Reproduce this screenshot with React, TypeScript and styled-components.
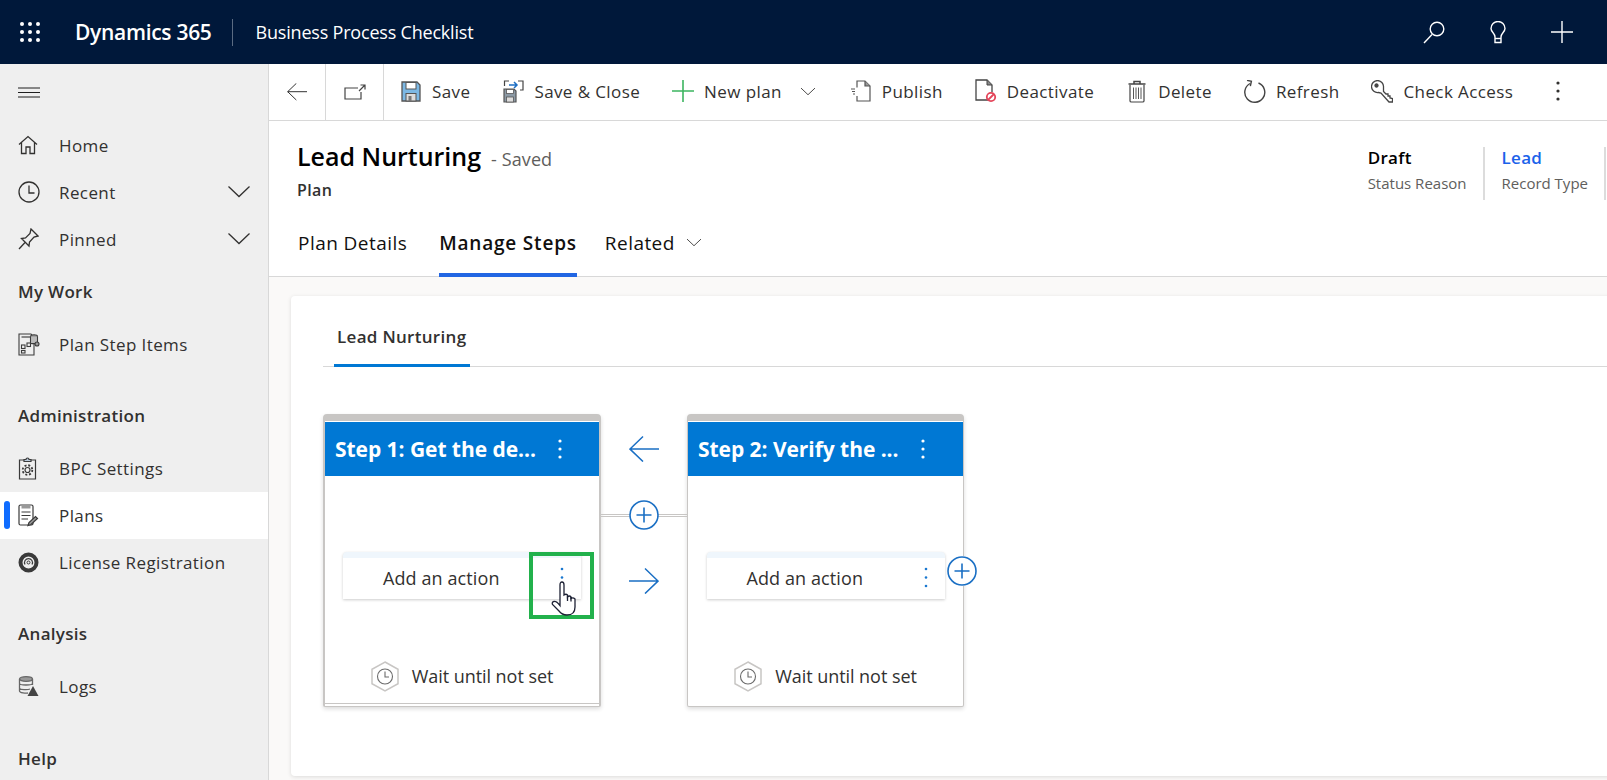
import * as React from 'react';
import styled, { createGlobalStyle } from 'styled-components';

const GlobalStyle = createGlobalStyle`
  html, body { margin: 0; padding: 0; height: 100%; overflow: hidden; background: #fff; }
  body { font-family: 'Open Sans', 'Noto Sans', 'Liberation Sans', sans-serif; color: #323130; }
  * { box-sizing: border-box; }
`;

const Page = styled.div`
  width: 1607px;
  height: 780px;
  display: flex;
  flex-direction: column;
  overflow: hidden;
`;

// top navy bar
const TopBar = styled.header`
  height: 64px;
  flex: none;
  background: #00183a;
  color: #fff;
  display: flex;
  align-items: center;
  padding-left: 20px;
`;

const AppName = styled.div`
  margin-left: 35px;
  font-size: 21px;
  font-weight: 600;
  letter-spacing: -0.3px;
  padding-right: 20px;
  height: 27px;
  line-height: 27px;
  border-right: 1px solid #5b6b82;
`;

const EntityName = styled.div`
  margin-left: 23px;
  font-size: 18px;
  letter-spacing: -0.2px;
`;

const TopIcons = styled.div`
  margin-left: auto;
  display: flex;
  align-items: center;
  gap: 45px;
  padding-right: 34px;
`;

const Body = styled.div`
  flex: 1;
  display: flex;
  min-height: 0;
`;

// left navigation
const Sidebar = styled.nav`
  width: 269px;
  flex: none;
  background: #efefef;
  border-right: 1px solid #d8d8d8;
  overflow: hidden;
`;

const Burger = styled.div`
  height: 58px;
  display: flex;
  align-items: center;
  padding: 0 0 2px 18px;
`;

const NavRow = styled.div<{ $active?: boolean }>`
  position: relative;
  height: 47px;
  display: flex;
  align-items: center;
  padding: 0 17px 1px 18px;
  background: ${(p) => (p.$active ? '#fff' : 'transparent')};
  font-size: 17px;
  letter-spacing: 0.4px;
  color: #323130;
`;

const ActiveMark = styled.span`
  position: absolute;
  left: 4px;
  top: 9px;
  width: 6px;
  height: 28px;
  border-radius: 3px;
  background: #0f6cff;
`;

const NavIcon = styled.span`
  width: 41px;
  flex: none;
  display: flex;
  align-items: center;
`;

const NavChevron = styled.span`
  margin-left: auto;
  display: flex;
`;

const NavGroup = styled.div<{ $gap: number }>`
  margin-top: ${(p) => p.$gap}px;
`;

const NavLabel = styled.div`
  height: 48px;
  margin-bottom: 4px;
  padding: 0 0 4px 18px;
  display: flex;
  align-items: center;
  font-size: 17px;
  font-weight: 600;
  letter-spacing: 0.3px;
  color: #323130;
`;

const Main = styled.main`
  flex: 1;
  min-width: 0;
  display: flex;
  flex-direction: column;
`;

// command bar
const Toolbar = styled.div`
  height: 57px;
  flex: none;
  display: flex;
  align-items: center;
  border-bottom: 1px solid #d8d8d8;
  background: #fff;
`;

const ToolSquare = styled.div<{ $width: number }>`
  width: ${(p) => p.$width}px;
  height: 100%;
  flex: none;
  display: flex;
  align-items: center;
  justify-content: center;
  border-right: 1px solid #d8d8d8;
`;

const ToolButton = styled.div`
  display: flex;
  align-items: center;
  gap: 10px;
  padding: 0 16px 2px;
  font-size: 17px;
  letter-spacing: 0.4px;
  color: #323130;
  white-space: nowrap;
`;

const ToolIcon = styled.span`
  width: 22px;
  height: 24px;
  flex: none;
  display: flex;
  align-items: center;
  justify-content: center;
`;

const SplitChevron = styled.span`
  margin: 0 2px 0 8px;
  display: flex;
`;

const ToolMore = styled.div`
  margin-left: 10px;
  padding: 0 16px 2px;
  display: flex;
`;

// record header
const FormHead = styled.div`
  flex: none;
  height: 103px;
  display: flex;
  justify-content: space-between;
  padding-left: 28px;
  background: #fff;
`;

const TitleBlock = styled.div`
  padding-top: 17px;
`;

const TitleRow = styled.div`
  display: flex;
  align-items: baseline;
  gap: 10px;
  height: 36px;
`;

const Title = styled.h1`
  margin: 0;
  font-size: 25px;
  line-height: 36px;
  font-weight: 600;
  color: #000;
`;

const SavedNote = styled.span`
  font-size: 18px;
  letter-spacing: 0.1px;
  color: #605e5c;
`;

const EntityType = styled.div`
  margin-top: 5px;
  font-size: 16px;
  font-weight: 600;
  color: #323130;
  letter-spacing: 0.4px;
`;

const HeadFields = styled.div`
  display: flex;
  align-items: flex-start;
  padding-top: 26px;
  padding-right: 1px;
`;

const HeadField = styled.div`
  height: 53px;
  padding: 0 16px 0 17px;
  border-right: 2px solid #dcdcdc;
`;

const FieldValue = styled.div<{ $link?: boolean }>`
  font-size: 17px;
  line-height: 22px;
  font-weight: 600;
  letter-spacing: 0.3px;
  color: ${(p) => (p.$link ? '#1b62ea' : '#000')};
`;

const FieldLabel = styled.div`
  margin-top: 5px;
  font-size: 15px;
  line-height: 19px;
  color: #605e5c;
`;

const FormTabs = styled.div`
  flex: none;
  height: 53px;
  padding: 0 0 0 29px;
  display: flex;
  gap: 32px;
  background: #fff;
  border-bottom: 1px solid #d8d8d8;
`;

const FormTab = styled.div<{ $active?: boolean; $tight?: boolean }>`
  height: 53px;
  display: flex;
  align-items: center;
  gap: 11px;
  padding-bottom: 12px;
  margin-left: ${(p) => (p.$tight ? -4 : 0)}px;
  font-size: 19px;
  letter-spacing: ${(p) => (p.$active ? 0.8 : 0.45)}px;
  font-weight: ${(p) => (p.$active ? 600 : 400)};
  color: #11100f;
  border-bottom: 4px solid ${(p) => (p.$active ? '#2266e3' : 'transparent')};
`;

const Content = styled.div`
  flex: 1;
  min-height: 0;
  background: #faf9f8;
  padding: 19px 0 0 22px;
  overflow: hidden;
`;

const Card = styled.section`
  width: 1330px;
  height: 480px;
  background: #fff;
  border-radius: 4px;
  box-shadow: 0 1px 4px rgba(0, 0, 0, 0.12);
  padding-left: 32px;
`;

const CardTabs = styled.div`
  height: 71px;
  display: flex;
  align-items: flex-end;
  padding-left: 11px;
  border-bottom: 1px solid #d8d8d8;
`;

const CardTab = styled.div`
  height: 54px;
  width: 136px;
  margin-bottom: -1px;
  padding: 10px 3px 0;
  font-size: 17px;
  line-height: 27px;
  font-weight: 600;
  letter-spacing: 0.3px;
  color: #323130;
  white-space: nowrap;
  border-bottom: 3px solid #0078d4;
`;

const Steps = styled.div`
  display: flex;
  margin-top: 47px;
`;

const StepCard = styled.div<{ $selected?: boolean; $width: number }>`
  width: ${(p) => p.$width}px;
  height: 293px;
  flex: none;
  display: flex;
  flex-direction: column;
  background: #fff;
  border-radius: 4px 4px 2px 2px;
  border: ${(p) => (p.$selected ? 2 : 1)}px solid #c8c6c4;
  border-top: 7px solid #c8c6c4;
  border-bottom: 1px solid #c8c6c4;
  box-shadow: ${(p) => (p.$selected ? 'inset 0 -2px 0 #fff, inset 0 -3px 0 #c8c6c4, ' : '')}0 2px 4px rgba(0, 0, 0, 0.14);
`;

const StepHead = styled.div`
  margin-top: 1px;
  height: 54px;
  flex: none;
  background: #0078d4;
  color: #fff;
  display: flex;
  align-items: center;
  padding-left: 10px;
`;

const StepTitle = styled.div`
  width: 222px;
  flex: none;
  font-size: 21px;
  font-weight: 700;
  letter-spacing: -0.05px;
  white-space: nowrap;
`;

const ActionBox = styled.div`
  position: relative;
  margin: 76px auto 0;
  width: 238px;
  height: 47px;
  flex: none;
  display: flex;
  align-items: center;
  padding-top: 6px;
  background: #fff;
  border-top: 6px solid #eff6fc;
  border-radius: 4px 4px 0 0;
  box-shadow: 0 1px 3px rgba(0, 0, 0, 0.2);
`;

const ActionText = styled.div`
  margin-left: 40px;
  font-size: 18px;
  letter-spacing: 0.1px;
  margin-top: -8px;
  color: #323130;
  white-space: nowrap;
`;

const ActionMenu = styled.span`
  position: absolute;
  left: 216px;
  top: 9px;
  display: flex;
`;

const AddRound = styled.span`
  position: absolute;
  left: 240px;
  top: -2px;
  display: flex;
  background: #fff;
  border-radius: 50%;
`;

// green call-out and pointer drawn on top of the first step
const Highlight = styled.div`
  position: absolute;
  left: 186px;
  top: -6px;
  width: 65px;
  height: 67px;
  border: 4px solid #22b14c;
`;

const Pointer = styled.span`
  position: absolute;
  left: 208px;
  top: 23px;
  display: flex;
`;

const StepFoot = styled.div`
  margin-top: auto;
  height: 45px;
  flex: none;
  display: flex;
  align-items: flex-start;
  justify-content: center;
  gap: 13px;
  font-size: 18px;
  letter-spacing: -0.05px;
  color: #323130;
  line-height: 30px;
`;

const Between = styled.div`
  position: relative;
  width: 86px;
  flex: none;
  display: flex;
  flex-direction: column;
  align-items: center;
  gap: 38px;
  padding-top: 22px;
`;

const Connector = styled.div`
  position: absolute;
  left: 0;
  right: 0;
  top: 100px;
  height: 3px;
  border-top: 1px solid #c8c6c4;
  border-bottom: 1px solid #c8c6c4;
`;

const BetweenIcon = styled.span`
  position: relative;
  display: flex;
`;

const Waffle = () => (
  <svg width="20" height="20" viewBox="0 0 20 20" fill="#fff">
    {[2, 10, 18].flatMap((y) => [2, 10, 18].map((x) => <circle key={`${x}-${y}`} cx={x} cy={y} r="2" />))}
  </svg>
);

const Kebab = ({ color = '#323130', h = 20, r = 1.6 }: { color?: string; h?: number; r?: number }) => (
  <svg width="6" height={h} viewBox={`0 0 6 ${h}`} fill={color}>
    <circle cx="3" cy="2" r={r} />
    <circle cx="3" cy={h / 2} r={r} />
    <circle cx="3" cy={h - 2} r={r} />
  </svg>
);

const Chevron = ({ size = 24, stroke = '#323130' }: { size?: number; stroke?: string }) => (
  <svg width={size} height={size * 0.55} viewBox="0 0 24 13" fill="none" stroke={stroke} strokeWidth="1.3">
    <path d="M1.5 1.5L12 11.5L22.5 1.5" />
  </svg>
);

const line = { fill: 'none', stroke: '#323130', strokeWidth: 1.3 };

const HomeIcon = () => (
  <svg width="20" height="20" viewBox="0 0 20 20" {...line}>
    <path d="M1 9.5L10 1.5L19 9.5M3.5 7.5V18.5H8V12H12V18.5H16.5V7.5" />
  </svg>
);
const ClockIcon = () => (
  <svg width="22" height="22" viewBox="0 0 22 22" {...line}>
    <circle cx="11" cy="11" r="10" />
    <path d="M11 4.5V12H16.5" />
  </svg>
);
const PinIcon = () => (
  <svg width="21" height="22" viewBox="0 0 21 22" {...line}>
    <path d="M13 1L20 8L16 9L11.5 14L11 18L3.5 10.5L7.5 10L12 5.5L13 1Z" />
    <path d="M7 14.500L1 21" />
  </svg>
);
const PlanItemsIcon = () => (
  <svg width="22" height="23" viewBox="0 0 22 23" fill="none" stroke="#3c3c3c" strokeWidth="1.1">
    <path d="M1 1H13L16 4V22H1Z" />
    <rect x="3.500" y="3" width="9" height="2" fill="#888" stroke="none" />
    <rect x="3.500" y="12" width="3.500" height="3.500" />
    <rect x="9" y="10" width="3.500" height="3.500" />
    <rect x="3.500" y="17.500" width="3.500" height="2.500" />
    <ellipse cx="16" cy="3.500" rx="3.500" ry="1.800" fill="#888" />
    <path d="M12.500 3.500V10C12.500 11 19.500 11 19.500 10V3.500" fill="#bbb" />
    <circle cx="19" cy="11" r="2" fill="#999" />
  </svg>
);
const SettingsIcon = () => (
  <svg width="19" height="23" viewBox="0 0 19 23" fill="none" stroke="#3a3a3a" strokeWidth="1.2">
    <path d="M6 3H1.500V22H17.500V3H13" />
    <path d="M6 4.500V2.500H8C8 0.500 11 0.500 11 2.500H13V4.500Z" fill="#bcd" />
    <circle cx="9.500" cy="13" r="2.500" />
    <circle cx="9.500" cy="13" r="4.800" strokeDasharray="2 1.800" strokeWidth="1.800" />
  </svg>
);
const PlansIcon = () => (
  <svg width="21" height="23" viewBox="0 0 21 23" fill="none" stroke="#3a3a3a" strokeWidth="1.2">
    <rect x="1" y="1" width="14" height="20" rx="1.500" />
    <rect x="3.500" y="1" width="9" height="3.500" fill="#999" stroke="none" />
    <path d="M3.500 8H12.500M3.500 11.500H12.500M3.500 15H10" />
    <path d="M10 21.500L11 18.500L17.500 12.500L19.500 14.500L13 20.500Z" fill="#999" />
  </svg>
);
const LicenseIcon = () => (
  <svg width="21" height="21" viewBox="0 0 21 21" fill="none">
    <circle cx="10.500" cy="10.500" r="8" stroke="#3a3a3a" strokeWidth="4" />
    <path d="M7 12.500A4 4 0 1 1 14 12.500" stroke="#3a3a3a" strokeWidth="1.200" />
    <circle cx="10.500" cy="10.500" r="1.500" stroke="#3a3a3a" />
  </svg>
);
const LogsIcon = () => (
  <svg width="21" height="21" viewBox="0 0 21 21" fill="none" stroke="#666" strokeWidth="1.300">
    <ellipse cx="8" cy="3" rx="6.500" ry="2.300" fill="#999" />
    <path d="M1.500 3V15C1.500 17 8 17.500 10 17M14.500 3V9M1.500 7.500C1.500 9.500 14.500 9.500 14.500 7.500M1.500 12C1.500 14 10 14 12 13" />
    <path d="M15 10L20.500 20H9.500Z" fill="#444" stroke="none" />
  </svg>
);

const SaveIcon = () => (
  <svg width="20" height="21" viewBox="0 0 20 21">
    <path d="M1 1H16L19 4V20H1Z" fill="#7cb8e4" stroke="#555" strokeWidth="1.300" />
    <rect x="5" y="1.500" width="10" height="6.500" fill="#fff" stroke="#555" />
    <rect x="5" y="12.500" width="10" height="7.500" fill="#ddd" stroke="#555" />
    <rect x="7.500" y="15" width="3" height="5" fill="#777" />
  </svg>
);
const SaveCloseIcon = () => (
  <svg width="21" height="23" viewBox="0 0 21 23">
    <path d="M1 9H11L13 11V22H1Z" fill="#8c9aa6" stroke="#555" strokeWidth="1.200" />
    <rect x="3.500" y="9.500" width="7" height="4" fill="#fff" stroke="#555" strokeWidth="0.800" />
    <rect x="3.500" y="17" width="7" height="5" fill="#ddd" stroke="#555" strokeWidth="0.800" />
    <path d="M1.500 6V1H6M15 1H20V10H17" fill="none" stroke="#444" strokeWidth="1.200" />
    <path d="M6 5H14M11 2L14 5L11 8" fill="none" stroke="#1e6fc4" strokeWidth="1.500" />
  </svg>
);
const GreenPlus = () => (
  <svg width="22" height="22" viewBox="0 0 22 22" stroke="#3db560" strokeWidth="1.600">
    <path d="M11 0V22M0 11H22" />
  </svg>
);
const PublishIcon = () => (
  <svg width="21" height="22" viewBox="0 0 21 22" fill="none" stroke="#555" strokeWidth="1.200">
    <path d="M7 7.500V1H15L20 6V21H7V16" />
    <path d="M15 1V6H20" fill="#999" />
    <path d="M1 9H5M2 11.500H5M3 14H5" strokeWidth="1" />
  </svg>
);
const DeactivateIcon = () => (
  <svg width="22" height="24" viewBox="0 0 22 24" fill="none">
    <path d="M14 21H1V1H12L17 6V13" stroke="#444" strokeWidth="1.300" />
    <path d="M12 1V6H17" fill="#888" stroke="#444" />
    <circle cx="16" cy="18" r="4.200" stroke="#e4455a" strokeWidth="1.800" />
    <path d="M13 21L19 15" stroke="#e4455a" strokeWidth="1.800" />
  </svg>
);
const TrashIcon = () => (
  <svg width="18" height="23" viewBox="0 0 18 23" fill="none" stroke="#444" strokeWidth="1.200">
    <path d="M2 5V21C2 22 3 22 3.500 22H14.500C15 22 16 22 16 21V5" />
    <path d="M0.500 4H17.500M6 4V1.500H12V4" strokeWidth="1.500" />
    <path d="M5.500 7.500V19M8 7.500V19M10.500 7.500V19M13 7.500V19" strokeWidth="0.900" />
  </svg>
);
const RefreshIcon = () => (
  <svg width="22" height="23" viewBox="0 0 22 23" fill="none" stroke="#444" strokeWidth="1.400">
    <path d="M14.500 3A10 10 0 1 1 6 3.500" />
    <path d="M2.500 1H7V6" strokeLinejoin="miter" transform="rotate(12 6 3)" />
  </svg>
);
const KeyIcon = () => (
  <svg width="22" height="23" viewBox="0 0 22 23" fill="none" stroke="#444" strokeWidth="1.300">
    <path d="M12.500 7A6 6 0 1 0 7.500 12.500L10 13L18 22H21.500V18.500L19 18V16H17V14H15L12.500 11.500Z" />
    <circle cx="5.500" cy="5.500" r="1.500" fill="#444" />
  </svg>
);
const Arrow = ({ dir, color = '#1a6fc4', size = 30 }: { dir: 'left' | 'right'; color?: string; size?: number }) => (
  <svg width={size} height={size * 0.87} viewBox="0 0 30 26" fill="none" stroke={color} strokeWidth="1.500">
    {dir === 'left' ? <path d="M30 13H1M14 0.500L1 13L14 25.500" /> : <path d="M0 13H29M16 0.500L29 13L16 25.500" />}
  </svg>
);
const CirclePlus = () => (
  <svg width="30" height="30" viewBox="0 0 30 30" fill="#fff" stroke="#1a6fc4" strokeWidth="1.600">
    <circle cx="15" cy="15" r="14" />
    <path d="M7.500 15H22.500M15 7.500V22.500" />
  </svg>
);
const HexClock = () => (
  <svg width="28" height="31" viewBox="0 0 28 31" fill="none">
    <path d="M14 1L27 8.300V22.700L14 30L1 22.700V8.300Z" stroke="#c8c6c4" strokeWidth="1.500" />
    <circle cx="14" cy="15.500" r="7.500" stroke="#6b6b6b" strokeWidth="1.100" />
    <path d="M14 10.500V16H18" stroke="#6b6b6b" strokeWidth="1.100" />
  </svg>
);
const Hand = () => (
  <svg width="26" height="35" viewBox="0 0 26 35" fill="#fff" stroke="#1c2033" strokeWidth="1.300">
    <path d="M9 22V4Q9 1 11 1Q13 1 13 4V14Q15 12.500 16.500 14V16Q18.500 14 20 16V17.500Q22 16 24 18V26Q24 34 16 34Q11 34 8 30L1.500 23.500Q0.500 21 3 20.500Q5.500 20 9 24.500Z" />
    <path d="M16.500 15V20M20 16V20.500" fill="none" />
  </svg>
);

const navIcons = {
  home: <HomeIcon />,
  clock: <ClockIcon />,
  pin: <PinIcon />,
  items: <PlanItemsIcon />,
  settings: <SettingsIcon />,
  plans: <PlansIcon />,
  license: <LicenseIcon />,
  logs: <LogsIcon />,
};

const Step = ({ title, selected, width, children }: { title: string; selected?: boolean; width: number; children?: React.ReactNode }) => (
  <StepCard $selected={selected} $width={width}>
    <StepHead>
      <StepTitle>{title}</StepTitle>
      <Kebab color="#fff" />
    </StepHead>
    <ActionBox>
      <ActionText>Add an action</ActionText>
      <ActionMenu>
        <Kebab color="#1a78d0" h={21} r={1.3} />
      </ActionMenu>
      {children}
    </ActionBox>
    <StepFoot>
      <HexClock />
      Wait until not set
    </StepFoot>
  </StepCard>
);

const App = () => (
  <Page>
    <GlobalStyle />
    <TopBar>
      <Waffle />
      <AppName>Dynamics 365</AppName>
      <EntityName>Business Process Checklist</EntityName>
      <TopIcons>
        <svg width="22" height="23" viewBox="0 0 22 23" fill="none" stroke="#fff" strokeWidth="1.400">
          <circle cx="14" cy="8" r="6.800" />
          <path d="M9 13.500L1 22" />
        </svg>
        <svg width="16" height="23" viewBox="0 0 16 23" fill="none" stroke="#fff" strokeWidth="1.400">
          <path d="M5 16C5 12 1 11 1 7.500A7 7 0 0 1 15 7.500C15 11 11 12 11 16V21.500H5Z" />
          <path d="M5 17.500H11" />
        </svg>
        <svg width="22" height="22" viewBox="0 0 22 22" stroke="#fff" strokeWidth="1.400">
          <path d="M11 0V22M0 11H22" />
        </svg>
      </TopIcons>
    </TopBar>
    <Body>
      <Sidebar>
        <Burger>
          <svg width="22" height="11" viewBox="0 0 22 11" stroke="#1f1f1f" strokeWidth="1">
            <path d="M0 1H22M0 5.500H22M0 10H22" />
          </svg>
        </Burger>
        <NavRow><NavIcon>{navIcons.home}</NavIcon>Home</NavRow>
        <NavRow><NavIcon>{navIcons.clock}</NavIcon>Recent<NavChevron><Chevron /></NavChevron></NavRow>
        <NavRow><NavIcon>{navIcons.pin}</NavIcon>Pinned<NavChevron><Chevron /></NavChevron></NavRow>
        <NavGroup $gap={6}>
          <NavLabel>My Work</NavLabel>
          <NavRow><NavIcon>{navIcons.items}</NavIcon>Plan Step Items</NavRow>
        </NavGroup>
        <NavGroup $gap={25}>
          <NavLabel>Administration</NavLabel>
          <NavRow><NavIcon>{navIcons.settings}</NavIcon>BPC Settings</NavRow>
          <NavRow $active><ActiveMark /><NavIcon>{navIcons.plans}</NavIcon>Plans</NavRow>
          <NavRow><NavIcon>{navIcons.license}</NavIcon>License Registration</NavRow>
        </NavGroup>
        <NavGroup $gap={25}>
          <NavLabel>Analysis</NavLabel>
          <NavRow><NavIcon>{navIcons.logs}</NavIcon>Logs</NavRow>
        </NavGroup>
        <NavGroup $gap={26}>
          <NavLabel>Help</NavLabel>
        </NavGroup>
      </Sidebar>
      <Main>
        <Toolbar>
          <ToolSquare $width={57}><Arrow dir="left" color="#333" size={20} /></ToolSquare>
          <ToolSquare $width={58}>
            <svg width="22" height="16" viewBox="0 0 22 16" fill="none" stroke="#444" strokeWidth="1.200">
              <path d="M14 4H1V15H17V8" />
              <path d="M15 7L21 1M16.500 1H21V5.500" />
            </svg>
          </ToolSquare>
          <ToolButton><ToolIcon><SaveIcon /></ToolIcon>Save</ToolButton>
          <ToolButton><ToolIcon><SaveCloseIcon /></ToolIcon>Save &amp; Close</ToolButton>
          <ToolButton>
            <ToolIcon><GreenPlus /></ToolIcon>New plan
            <SplitChevron><Chevron size={16} /></SplitChevron>
          </ToolButton>
          <ToolButton><ToolIcon><PublishIcon /></ToolIcon>Publish</ToolButton>
          <ToolButton><ToolIcon><DeactivateIcon /></ToolIcon>Deactivate</ToolButton>
          <ToolButton><ToolIcon><TrashIcon /></ToolIcon>Delete</ToolButton>
          <ToolButton><ToolIcon><RefreshIcon /></ToolIcon>Refresh</ToolButton>
          <ToolButton><ToolIcon><KeyIcon /></ToolIcon>Check Access</ToolButton>
          <ToolMore><Kebab h={20} /></ToolMore>
        </Toolbar>
        <FormHead>
          <TitleBlock>
            <TitleRow>
              <Title>Lead Nurturing</Title>
              <SavedNote>- Saved</SavedNote>
            </TitleRow>
            <EntityType>Plan</EntityType>
          </TitleBlock>
          <HeadFields>
            <HeadField>
              <FieldValue>Draft</FieldValue>
              <FieldLabel>Status Reason</FieldLabel>
            </HeadField>
            <HeadField>
              <FieldValue $link>Lead</FieldValue>
              <FieldLabel>Record Type</FieldLabel>
            </HeadField>
          </HeadFields>
        </FormHead>
        <FormTabs>
          <FormTab>Plan Details</FormTab>
          <FormTab $active>Manage Steps</FormTab>
          <FormTab $tight>Related<Chevron size={16} /></FormTab>
        </FormTabs>
        <Content>
          <Card>
            <CardTabs>
              <CardTab>Lead Nurturing</CardTab>
            </CardTabs>
            <Steps>
              <Step title="Step 1: Get the de..." selected width={278}>
                <Highlight />
                <Pointer><Hand /></Pointer>
              </Step>
              <Between>
                <Connector />
                <BetweenIcon><Arrow dir="left" /></BetweenIcon>
                <BetweenIcon><CirclePlus /></BetweenIcon>
                <BetweenIcon><Arrow dir="right" /></BetweenIcon>
              </Between>
              <Step title="Step 2: Verify the ..." width={277}>
                <AddRound><CirclePlus /></AddRound>
              </Step>
            </Steps>
          </Card>
        </Content>
      </Main>
    </Body>
  </Page>
);

export default App;
